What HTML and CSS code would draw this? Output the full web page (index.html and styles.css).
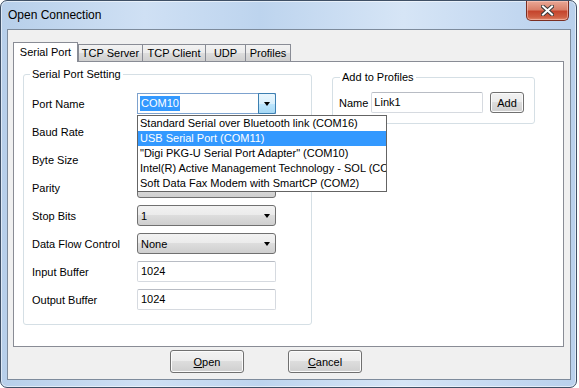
FILE: index.html
```html
<!DOCTYPE html>
<html lang="en">
<head>
    <meta charset="UTF-8">
    <title>Open Connection</title>
    <link rel="stylesheet" href="styles.css">
</head>
<body>
    <div class="window">
        <div class="titlebar">
            <span class="title">Open Connection</span>
            <div class="close-btn">
                <svg width="13" height="11" viewBox="0 0 13 11">
                    <path d="M2 1.5 L11 9.5 M11 1.5 L2 9.5" stroke="#3a3a3a" stroke-width="4" stroke-linecap="square"/>
                    <path d="M2 1.5 L11 9.5 M11 1.5 L2 9.5" stroke="#fff" stroke-width="2" stroke-linecap="square"/>
                </svg>
            </div>
        </div>

        <div class="client">
            <div class="tabs">
                <div class="tab active">Serial Port</div>
                <div class="tab tab-server">TCP Server</div>
                <div class="tab tab-client">TCP Client</div>
                <div class="tab tab-udp">UDP</div>
                <div class="tab tab-profiles">Profiles</div>
            </div>

            <div class="tab-panel">
                <fieldset class="group serial-group">
                    <legend>Serial Port Setting</legend>
                    <div class="form-grid">
                        <label>Port Name</label>
                        <div class="combo editable">
                            <span class="sel-text">COM10</span>
                            <span class="drop-btn"><i class="arrow"></i></span>
                            <!-- open dropdown list -->
                            <div class="dropdown-list">
                                <div class="item">Standard Serial over Bluetooth link (COM16)</div>
                                <div class="item selected">USB Serial Port (COM11)</div>
                                <div class="item">"Digi PKG-U Serial Port Adapter" (COM10)</div>
                                <div class="item">Intel(R) Active Management Technology - SOL (COM3)</div>
                                <div class="item">Soft Data Fax Modem with SmartCP (COM2)</div>
                            </div>
                        </div>

                        <label>Baud Rate</label>
                        <div class="combo"><span>9600</span><i class="arrow"></i></div>

                        <label>Byte Size</label>
                        <div class="combo"><span>8</span><i class="arrow"></i></div>

                        <label>Parity</label>
                        <div class="combo"><span>None</span><i class="arrow"></i></div>

                        <label>Stop Bits</label>
                        <div class="combo"><span>1</span><i class="arrow"></i></div>

                        <label>Data Flow Control</label>
                        <div class="combo"><span>None</span><i class="arrow"></i></div>

                        <label>Input Buffer</label>
                        <div class="textbox">1024</div>

                        <label>Output Buffer</label>
                        <div class="textbox">1024</div>
                    </div>
                </fieldset>

                <fieldset class="group profile-group">
                    <legend>Add to Profiles</legend>
                    <div class="profile-row">
                        <label>Name</label>
                        <div class="textbox name-box">Link1</div>
                        <button class="btn add-btn">Add</button>
                    </div>
                </fieldset>
            </div>

            <div class="actions">
                <button class="btn dlg-btn"><u>O</u>pen</button>
                <button class="btn dlg-btn"><u>C</u>ancel</button>
            </div>
        </div>
    </div>
</body>
</html>
```

FILE: styles.css
```css
/* General */
* {
    margin: 0;
    padding: 0;
    box-sizing: border-box;
}

body {
    background-color: #ffffff;
    font-family: "Liberation Sans", Arial, sans-serif;
    font-size: 11px;
    color: #000;
}

/* Window frame */
.window {
    width: 577px;
    height: 388px;
    border: 1px solid #3f5066;
    border-radius: 7px;
    background: linear-gradient(90deg, #b7cfea 0%, #cfe0f4 25%, #bdd4ee 45%, #d6e5f6 70%, #c2d7f0 90%, #b9d0ec 100%);
    box-shadow: inset 0 0 0 1px rgba(255, 255, 255, 0.55);
    display: flex;
    flex-direction: column;
}

.titlebar {
    height: 28px;
    display: flex;
    justify-content: space-between;
    align-items: flex-start;
    padding: 0 7px 0 7px;
}

.title {
    margin-top: 7px;
    line-height: 14px;
    font-size: 12px;
    color: #000;
}

.close-btn {
    width: 43px;
    height: 20px;
    border: 1px solid #7a2e22;
    border-top: none;
    border-radius: 0 0 5px 5px;
    background: linear-gradient(#e9a896 0%, #d9806a 45%, #c5452d 55%, #cf5f43 85%, #e08a6f 100%);
    box-shadow: inset 0 0 0 1px rgba(255, 210, 200, 0.5);
    display: flex;
    align-items: center;
    justify-content: center;
}

/* Client area */
.client {
    height: 351px;
    margin: 0 5px 0 6px;
    border: 1px solid #7d8b9c;
    background-color: #f0f0f0;
    padding: 12px 0 0 5px;
}

/* Tabs */
.tabs {
    display: flex;
    align-items: flex-end;
    height: 19px;
}

.tab {
    height: 17px;
    line-height: 16px;
    text-align: center;
    border: 1px solid #898c95;
    border-bottom: none;
    margin-left: -1px;
    background: linear-gradient(#f2f2f2 0%, #ebebeb 50%, #dddddd 50%, #cfcfcf 100%);
}

.tab.active {
    width: 65px;
    height: 20px;
    line-height: 18px;
    margin-left: 0;
    margin-bottom: -1px;
    background: #ffffff;
    position: relative;
    z-index: 1;
}

.tab-server {
    width: 65px;
    margin-left: 0;
}

.tab-client {
    width: 64px;
}

.tab-udp {
    width: 41px;
}

.tab-profiles {
    width: 46px;
}

.tab-panel {
    width: 551px;
    height: 286px;
    border: 1px solid #898c95;
    background-color: #ffffff;
    padding: 6px 9px;
    display: flex;
    align-items: flex-start;
}

/* Group boxes */
.group {
    border: 1px solid #d5dfe5;
    border-radius: 3px;
    min-width: 0;
}

.group legend {
    line-height: 13px;
    padding: 0 2px;
}

.serial-group {
    width: 289px;
    padding: 12px 8px 14px 8px;
}

.serial-group legend {
    margin-left: -2px;
}

.profile-group {
    width: 203px;
    margin-left: 20px;
    margin-top: 3px;
    padding: 8px 10px 10px 6px;
}

.profile-group legend {
    margin-left: 1px;
}

.form-grid {
    display: grid;
    grid-template-columns: 105px 139px;
    grid-auto-rows: 21px;
    row-gap: 7px;
    align-items: center;
}

/* Combo boxes */
.combo {
    height: 21px;
    border: 1px solid #707070;
    border-radius: 3px;
    background: linear-gradient(#f2f2f2 0%, #ebebeb 50%, #dddddd 50%, #cfcfcf 100%);
    display: flex;
    align-items: center;
    justify-content: space-between;
    padding: 0 5px 0 3px;
    position: relative;
}

.arrow {
    width: 0;
    height: 0;
    border-left: 3.5px solid transparent;
    border-right: 3.5px solid transparent;
    border-top: 4px solid #000;
}

.combo.editable {
    background: #ffffff;
    border: 1px solid #7da2ce;
    border-radius: 0;
    padding: 0 0 0 2px;
    z-index: 2;
}

.sel-text {
    background-color: #3399ff;
    color: #ffffff;
    line-height: 15px;
    padding: 0 1px;
}

.drop-btn {
    width: 18px;
    height: 21px;
    margin: -1px -1px -1px 0;
    border: 1px solid #3c7fb1;
    border-radius: 0 2px 2px 0;
    background: linear-gradient(#eaf6fd 0%, #d9f0fc 50%, #bee6fd 50%, #a7d9f5 100%);
    display: flex;
    align-items: center;
    justify-content: center;
}

/* Open dropdown list */
.dropdown-list {
    position: absolute;
    top: 21px;
    left: -1px;
    width: 250px;
    border: 1px solid #646464;
    background: #ffffff;
    overflow: hidden;
}

.item {
    height: 15px;
    line-height: 15px;
    padding-left: 2px;
    white-space: nowrap;
    overflow: hidden;
}

.item.selected {
    background-color: #3399ff;
    color: #ffffff;
}

/* Text boxes */
.textbox {
    height: 21px;
    border: 1px solid #d6dae0;
    border-top-color: #b8bcc4;
    border-radius: 2px;
    background: #ffffff;
    line-height: 19px;
    padding-left: 3px;
}

.profile-row {
    display: flex;
    align-items: center;
}

.name-box {
    width: 112px;
    margin-left: 3px;
    padding-left: 2px;
}

/* Buttons */
.btn {
    font-family: "Liberation Sans", Arial, sans-serif;
    font-size: 11px;
    color: #000;
    border: 1px solid #707070;
    border-radius: 3px;
    background: linear-gradient(#f2f2f2 0%, #ebebeb 50%, #dddddd 50%, #cfcfcf 100%);
    box-shadow: inset 0 0 0 1px #fbfbfb;
    height: 21px;
}

.add-btn {
    width: 34px;
    margin-left: 7px;
}

.actions {
    display: flex;
    gap: 44px;
    margin-top: 3px;
    padding-left: 157px;
}

.dlg-btn {
    width: 74px;
    height: 23px;
}
```
